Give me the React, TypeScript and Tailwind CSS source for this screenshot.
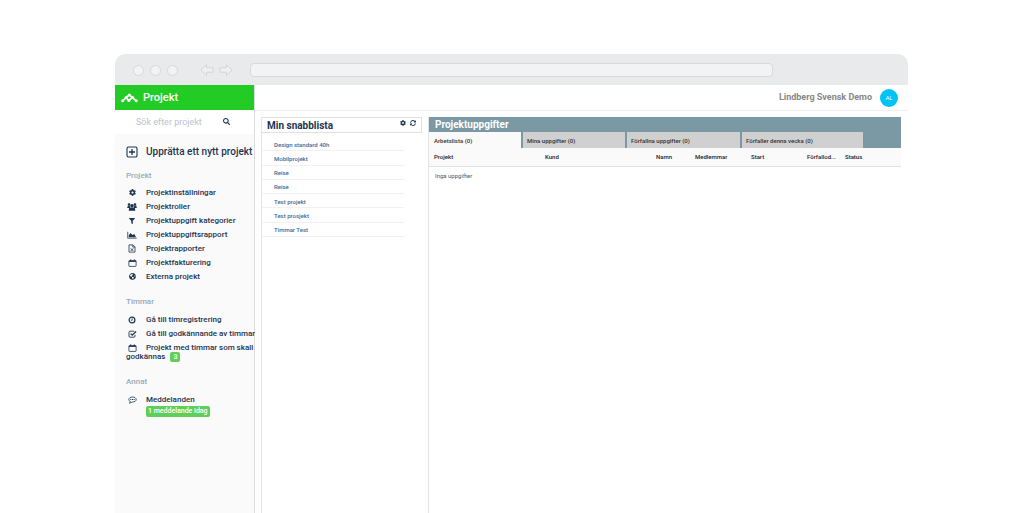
import React from "react";
import { FaCog, FaFilter, FaGlobeAmericas, FaSearch, FaSyncAlt } from "react-icons/fa";

interface MenuItem {
  icon: React.ReactNode;
  label: string;
}

const projectMenu: MenuItem[] = [
  { icon: <FaCog className="size-[7px]" />, label: "Projektinställningar" },
  { icon: <GroupIcon />, label: "Projektroller" },
  { icon: <FaFilter className="size-[6px]" />, label: "Projektuppgift kategorier" },
  { icon: <ChartIcon />, label: "Projektuppgiftsrapport" },
  { icon: <ExcelIcon />, label: "Projektrapporter" },
  { icon: <CalendarIcon />, label: "Projektfakturering" },
  { icon: <FaGlobeAmericas className="size-[7px]" />, label: "Externa projekt" },
];

const quickList = [
  "Design standard 40h",
  "Mobilprojekt",
  "Reise",
  "Reise",
  "Test projekt",
  "Test prosjekt",
  "Timmar Test",
];

const tabs = [
  { label: "Arbetslista (0)", className: "w-[92px] bg-[#fafafa] pl-[5px]" },
  { label: "Mina uppgifter (0)", className: "w-[102px] bg-[#d0d0d0] pl-1" },
  { label: "Förfallna uppgifter (0)", className: "w-[113px] bg-[#d0d0d0] pl-1" },
  { label: "Förfaller denna vecka (0)", className: "w-[121px] bg-[#d0d0d0] pl-1" },
];

const columns = [
  { label: "Projekt", className: "w-[116px] pl-[5px]" },
  { label: "Kund", className: "w-[111px]" },
  { label: "Namn", className: "w-[39px]" },
  { label: "Medlemmar", className: "w-[56px]" },
  { label: "Start", className: "w-[56px]" },
  { label: "Förfallod...", className: "w-[38px]" },
  { label: "Status", className: "" },
];

function GroupIcon() {
  return (
    <svg viewBox="0 0 10 8" className="h-2 w-[10px]" fill="currentColor">
      <circle cx="2" cy="1.6" r="1.3" />
      <circle cx="8" cy="1.6" r="1.3" />
      <circle cx="5" cy="2.8" r="1.8" />
      <path d="M.3 5V4Q.3 3 1.5 3h1.3l.4 1.4L2.2 5zM9.7 5V4Q9.7 3 8.500 3H7.200l-.4 1.400L7.800 5zM1.800 7.800V6.500Q1.800 4.800 3.400 4.600h3.200q1.600.2 1.600 1.900v1.300z" />
    </svg>
  );
}

function ChartIcon() {
  return (
    <svg viewBox="0 0 10 8" className="h-2 w-[10px]" fill="currentColor">
      <path d="M.4.800h.8v5.900H9.800v.8H.4z" />
      <path d="M1.800 6.200V4.200L3.600 1.900 5.500 4.100 7.400 2.900 9 6.200z" />
    </svg>
  );
}

function ExcelIcon() {
  return (
    <svg viewBox="0 0 8 9" className="h-[9px] w-2" fill="none" stroke="currentColor" strokeWidth=".8">
      <path d="M1 .900h4L7 2.900v5.200H1zM4.800.900v2.200H7" />
      <path d="M2.700 4.300 5.300 7M5.300 4.300 2.700 7" />
    </svg>
  );
}

function CalendarIcon() {
  return (
    <svg viewBox="0 0 9 8" className="h-2 w-[9px]" fill="none" stroke="currentColor">
      <rect x=".9" y="1.600" width="7.200" height="5.800" rx=".5" strokeWidth=".8" />
      <path d="M.9 2.300h7.200" strokeWidth="1.200" />
      <path d="M2.700.400v1.600M6.300.400v1.600" strokeWidth="1" />
    </svg>
  );
}

function ClockIcon() {
  return (
    <svg viewBox="0 0 8 8" className="size-2" fill="none" stroke="currentColor">
      <circle cx="4" cy="4" r="2.900" strokeWidth="1.200" />
      <path d="M4.200 2.400v1.900H2.900" strokeWidth=".8" />
    </svg>
  );
}

function CheckIcon() {
  return (
    <svg viewBox="0 0 9 8" className="h-2 w-[9px]" fill="none" stroke="currentColor">
      <path d="M7 4.800v1.400q0 1-1 1H2q-1 0-1-1V2.200q0-1 1-1h4.300" strokeWidth=".9" />
      <path d="M2.600 3.600 4.200 5.200 8.100 1.500" strokeWidth="1.300" />
    </svg>
  );
}

function CommentIcon() {
  return (
    <svg viewBox="0 0 9 8" className="h-2 w-[9px]" fill="none" stroke="currentColor">
      <path d="M4.500 1C2.400 1 .8 2.100.8 3.500c0 .9.600 1.600 1.500 2L1.600 7.200 4 6h.5c2.100 0 3.700-1.100 3.700-2.500S6.600 1 4.500 1z" strokeWidth=".8" />
      <path d="M2.300 3.500h1M4 3.500h1M5.700 3.500h1" strokeWidth="1" />
    </svg>
  );
}

function PlusBoxIcon() {
  return (
    <svg viewBox="0 0 12 12" className="size-3" fill="none" stroke="currentColor">
      <rect x="1" y="1" width="10" height="10" rx="1.6" strokeWidth="1.1" />
      <path d="M6 3v6M3 6h6" strokeWidth="1.3" />
    </svg>
  );
}

function Logo() {
  return (
    <svg viewBox="0 0 17 10" className="h-[10px] w-[17px]" fill="#fff" stroke="#fff">
      <path d="M1.7 7.800 5 4.600 7.800 7.400 11.400 4.600M5 4.600 8.300 1.900 15.200 7.800" fill="none" strokeWidth="1.7" />
      <g stroke="none">
        <circle cx="1.700" cy="7.800" r="1.500" />
        <circle cx="5" cy="4.600" r="1.400" />
        <circle cx="7.800" cy="7.500" r="1.500" />
        <circle cx="8.300" cy="1.900" r="1.500" />
        <circle cx="11.600" cy="4.600" r="1.500" />
        <circle cx="15.200" cy="7.800" r="1.500" />
      </g>
    </svg>
  );
}

function ArrowIcon({ className = "" }: { className?: string }) {
  return (
    <svg
      viewBox="0 0 14 12"
      className={`h-3 w-[14px] ${className}`}
      fill="#f0f0f1"
      stroke="#d4d5d6"
      strokeLinejoin="round"
    >
      <path d="M.8 6 6.500.800v3H13v4.400H6.500v3z" />
    </svg>
  );
}

function BrowserBar() {
  return (
    <div className="flex h-[31px] items-center rounded-t-[10px] bg-[#e9eaeb] pt-px pl-[18px]">
      <div className="flex gap-[6px]">
        <span className="size-[11px] rounded-full border border-[#d8d9da] bg-[#f3f3f3]" />
        <span className="size-[11px] rounded-full border border-[#d8d9da] bg-[#f3f3f3]" />
        <span className="size-[11px] rounded-full border border-[#d8d9da] bg-[#f3f3f3]" />
      </div>
      <div className="ml-[22px] flex gap-[5px]">
        <button type="button" aria-label="Bakåt">
          <ArrowIcon />
        </button>
        <button type="button" aria-label="Framåt">
          <ArrowIcon className="rotate-180" />
        </button>
      </div>
      <input
        type="text"
        aria-label="Adress"
        className="mr-[135px] ml-[17px] h-[14px] min-w-0 flex-1 rounded-[4px] border border-[#d8d9da] bg-[#f3f3f3] px-1 text-[8px] outline-none"
      />
    </div>
  );
}

function MenuLink({ icon, label, children }: MenuItem & { children?: React.ReactNode }) {
  return (
    <a href="#" className="block pt-[3px] pb-[2px] pl-[11px]">
      <span className="mr-2 inline-flex h-[9px] w-3 items-center justify-center align-top">{icon}</span>
      {label}
      {children}
    </a>
  );
}

function MenuHeading({ children }: { children: React.ReactNode }) {
  return <h2 className="pl-[11px] text-[8px] leading-[10px] font-medium text-[#9aa9b8]">{children}</h2>;
}

function Sidebar() {
  return (
    <aside className="flex w-[140px] shrink-0 flex-col border-r border-[#dcdcdc] bg-[#fafafa] text-[#1d3550]">
      <div className="flex h-[25px] items-center gap-[5px] bg-[#22cc25] pt-px pl-[6px] text-white">
        <Logo />
        <h1 className="text-[11px] font-medium">Projekt</h1>
      </div>
      <div className="flex h-6 items-center bg-white pl-[21px]">
        <input
          type="text"
          aria-label="Sök efter projekt"
          placeholder="Sök efter projekt"
          className="w-[87px] pt-px text-[9px] outline-none placeholder:text-[#bcc3ca]"
        />
        <button type="button" aria-label="Sök">
          <FaSearch className="mb-px size-[7px]" />
        </button>
      </div>
      <a href="#" className="mt-3 flex items-center gap-2 pl-[11px] text-[10px] leading-3 font-medium whitespace-nowrap">
        <PlusBoxIcon />
        Upprätta ett nytt projekt
      </a>
      <nav className="text-[8px] leading-[9px] font-medium">
        <div className="mt-[13px]">
          <MenuHeading>Projekt</MenuHeading>
          <div className="mt-1">
            {projectMenu.map((item) => (
              <MenuLink key={item.label} {...item} />
            ))}
          </div>
        </div>
        <div className="mt-[14px]">
          <MenuHeading>Timmar</MenuHeading>
          <div className="mt-[5px]">
            <MenuLink icon={<ClockIcon />} label="Gå till timregistrering" />
            <div className="whitespace-nowrap">
              <MenuLink icon={<CheckIcon />} label="Gå till godkännande av timmar" />
            </div>
            <div className="-mr-1">
              <MenuLink icon={<CalendarIcon />} label="Projekt med timmar som skall godkännas">
                <span className="ml-[5px] inline-flex h-[10px] items-center rounded-[2px] bg-[#5fcf5a] px-[3px] align-top text-[7px] text-white">
                  3
                </span>
              </MenuLink>
            </div>
          </div>
        </div>
        <div className="mt-[13px]">
          <MenuHeading>Annat</MenuHeading>
          <div className="mt-[5px]">
            <MenuLink icon={<CommentIcon />} label="Meddelanden" />
            <a
              href="#"
              className="ml-[31px] flex h-[11px] w-fit items-center rounded-[2px] bg-[#5fcf5a] px-[2px] text-[7px] text-white"
            >
              1 meddelande idag
            </a>
          </div>
        </div>
      </nav>
    </aside>
  );
}

function QuickList() {
  return (
    <section className="w-[161px] shrink-0 border-l border-[#e4e4e4]">
      <div className="flex h-4 items-center border-y border-r border-[#e0e0e0] pr-[5px] pl-[5px] text-[#1d3550]">
        <h2 className="flex-1 pt-px text-[10px] leading-3 font-bold">Min snabblista</h2>
        <div className="mb-1 flex gap-1">
          <button type="button" aria-label="Inställningar">
            <FaCog className="size-[6px]" />
          </button>
          <button type="button" aria-label="Uppdatera">
            <FaSyncAlt className="size-[6px]" />
          </button>
        </div>
      </div>
      <ul className="mt-1 mr-[18px] flex h-[100px] flex-col text-[6px] font-medium text-[#3c6a98]">
        {quickList.map((item, index) => (
          <li key={index} className="flex flex-1 items-center border-b border-[#f1f1f1] pt-px pl-3">
            <a href="#">{item}</a>
          </li>
        ))}
      </ul>
    </section>
  );
}

function TaskPanel() {
  return (
    <section className="min-w-0 flex-1 border-l border-[#e4e4e4]">
      <div className="bg-[#7b98a5]">
        <h2 className="h-[15px] pl-[6px] text-[10px] leading-4 font-bold text-white">Projektuppgifter</h2>
        <div role="tablist" className="flex h-4 gap-[2px]">
          {tabs.map((tab, index) => (
            <button
              key={tab.label}
              type="button"
              role="tab"
              aria-selected={index === 0}
              className={`pt-px text-left text-[6px] font-medium text-[#333] ${tab.className}`}
            >
              {tab.label}
            </button>
          ))}
        </div>
      </div>
      <table className="w-full table-fixed text-left text-[6px]">
        <thead className="bg-[#fafafa] text-[#222]">
          <tr className="h-[18px] border-b border-[#e2e2e2]">
            {columns.map((column) => (
              <th key={column.label} className={`p-0 font-medium whitespace-nowrap ${column.className}`}>
                {column.label}
              </th>
            ))}
          </tr>
        </thead>
        <tbody>
          <tr className="h-[18px] text-[#555]">
            <td colSpan={7} className="p-0 pl-[6px]">
              Inga uppgifter
            </td>
          </tr>
        </tbody>
      </table>
    </section>
  );
}

const App: React.FC = () => {
  return (
    <div className="flex min-h-screen flex-col bg-white pt-[54px] pr-[116px] pl-[115px] font-['Roboto',sans-serif]">
      <BrowserBar />
      <div className="flex flex-1">
        <Sidebar />
        <div className="flex min-w-0 flex-1 flex-col">
          <header className="flex h-[26px] items-center justify-end gap-2 border-b border-[#efefef] pr-[10px]">
            <span className="pt-px text-[9px] font-bold text-[#888]">Lindberg Svensk Demo</span>
            <span className="flex size-[18px] items-center justify-center rounded-full bg-[#00c3f5] text-[6px] text-white">
              AL
            </span>
          </header>
          <main className="flex flex-1 gap-[6px] pt-[6px] pr-[7px] pl-[6px]">
            <QuickList />
            <TaskPanel />
          </main>
        </div>
      </div>
    </div>
  );
};

export default App;
